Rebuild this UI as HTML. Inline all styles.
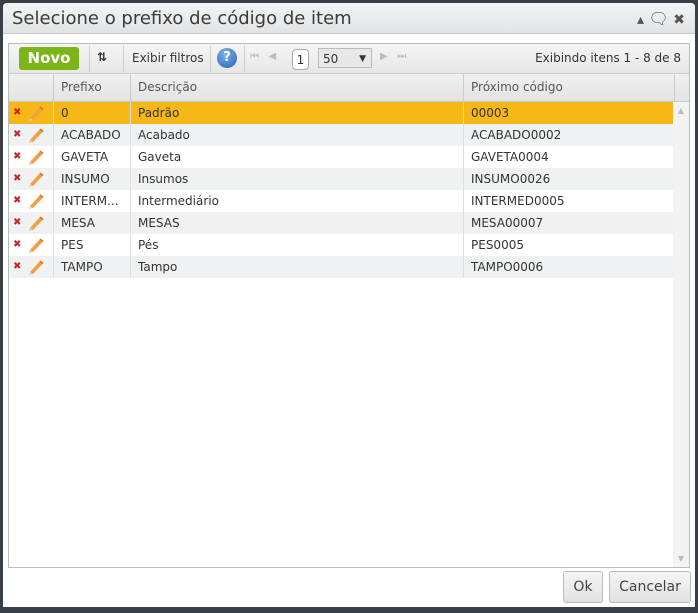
<!DOCTYPE html>
<html><head><meta charset="utf-8"><style>
body{margin:0;width:698px;height:613px;background:#3a3f47;font-family:"DejaVu Sans","Liberation Sans",sans-serif;font-size:12px;color:#333;position:relative;overflow:hidden}
.win{position:absolute;left:3px;top:3px;width:692px;height:604px;background:#fff;border-radius:4px 4px 0 0;overflow:hidden}
.title{height:30px;background:linear-gradient(#f3f4f5,#e1e3e5);border-bottom:1px solid #c5c8cc;font-size:18px;line-height:32px;padding-left:9px;color:#3a3a3a}
.ctrl{position:absolute;right:10px;top:6px;font-size:14px;color:#555}
.grid{position:absolute;left:5px;top:40px;width:680px;height:523px;border:1px solid #b8bbc0}
.tb{height:29px;background:linear-gradient(#f5f5f5,#e6e7e8);border-bottom:1px solid #ccc;position:relative}
.tb>*{position:absolute}
.novo{left:10px;top:3px;width:60px;height:23px;background:#7cb517;border-radius:3px;color:#fff;font-weight:bold;font-size:15px;line-height:23px;text-align:center}
.sep{top:2px;width:1px;height:26px;background:#ccc}
.hdr{height:27px;background:linear-gradient(#f0f0f0,#e4e4e4);border-bottom:1px solid #c8c8c8;position:relative}
.c{position:absolute;top:0;height:100%;border-left:1px solid #ccc;padding-left:7px;box-sizing:border-box;line-height:27px;color:#555}
.row{height:22px;position:relative}
.row .c{line-height:22px;color:#333;border-left:1px solid #ddd}
.row:nth-child(even){background:#f0f1f2}
.sel{background:#f5b816!important}
.x{position:absolute;left:4px;top:5px;color:#c8262a;font-size:10px;font-weight:bold}
.p{position:absolute;left:18px;top:3px}
.btn{position:absolute;top:568px;height:30px;border:1px solid #bbb;border-radius:3px;background:linear-gradient(#f5f5f5,#e2e2e2);font-size:14px;line-height:30px;text-align:center;color:#444}
</style></head><body>
<svg width="0" height="0" style="position:absolute"><defs><symbol id="pen" viewBox="0 0 18 16"><path d="M3 13 L13 2 L16 4.5 L6 15 Z" fill="#f0a040"/><path d="M3 13 L6 15 L2 16 Z" fill="#e8c9a0"/><path d="M13 2 L16 4.5" stroke="#e07020" stroke-width="1.5"/></symbol></defs></svg>
<div class="win">
<div class="title">Selecione o prefixo de código de item</div>
<div class="ctrl">▴ <span style="font-size:16px">🗨</span> ✖</div>
<div class="grid">
<div class="tb">
<div class="novo">Novo</div>
<div class="sep" style="left:80px"></div>
<div style="left:88px;top:6px;font-weight:bold">⇅</div>
<div class="sep" style="left:114px"></div>
<div style="left:123px;top:7px">Exibir filtros</div>
<div class="sep" style="left:201px"></div>
<div style="left:208px;top:4px;width:20px;height:20px;border-radius:50%;background:radial-gradient(circle at 40% 30%,#7ab0ea,#2a62b8);color:#fff;font-weight:bold;text-align:center;line-height:20px;font-size:13px">?</div>
<div class="sep" style="left:235px"></div>
<div style="left:241px;top:7px;color:#bbb;font-size:10px">⏮ &nbsp; ◀</div>
<div style="left:283px;top:5px;width:15px;height:19px;border:1px solid #aaa;border-radius:4px;background:#fff;text-align:center;line-height:20px">1</div>
<div style="left:309px;top:4px;width:54px;height:20px;border:1px solid #bbb;background:#e8e8e8;line-height:20px;padding-left:4px;box-sizing:border-box">50<span style="position:absolute;right:5px;font-size:9px">▼</span></div>
<div style="left:371px;top:7px;color:#bbb;font-size:10px">▶ &nbsp; ⏭</div>
<div style="right:8px;top:7px">Exibindo itens 1 - 8 de 8</div>
</div>
<div class="hdr">
<div class="c" style="left:44px;width:77px">Prefixo</div>
<div class="c" style="left:121px;width:333px">Descrição</div>
<div class="c" style="left:454px;width:211px">Próximo código</div>
<div class="c" style="left:665px;width:15px;padding:0"></div>
</div>
<div style="position:absolute;left:664px;top:58px;width:16px;height:465px;background:#f3f3f3"><div style="color:#bbb;font-size:8px;text-align:center;margin-top:4px">▲</div><div style="color:#bbb;font-size:8px;text-align:center;position:absolute;bottom:4px;width:16px">▼</div></div>
<div style="width:664px">
<div class="row sel"><span class="x">✖</span><svg class="p" width="18" height="16"><use href="#pen"/></svg><div class="c" style="left:44px;width:77px">0</div><div class="c" style="left:121px;width:333px">Padrão</div><div class="c" style="left:454px;width:210px">00003</div></div>
<div class="row"><span class="x">✖</span><svg class="p" width="18" height="16"><use href="#pen"/></svg><div class="c" style="left:44px;width:77px">ACABADO</div><div class="c" style="left:121px;width:333px">Acabado</div><div class="c" style="left:454px;width:210px">ACABADO0002</div></div>
<div class="row"><span class="x">✖</span><svg class="p" width="18" height="16"><use href="#pen"/></svg><div class="c" style="left:44px;width:77px">GAVETA</div><div class="c" style="left:121px;width:333px">Gaveta</div><div class="c" style="left:454px;width:210px">GAVETA0004</div></div>
<div class="row"><span class="x">✖</span><svg class="p" width="18" height="16"><use href="#pen"/></svg><div class="c" style="left:44px;width:77px">INSUMO</div><div class="c" style="left:121px;width:333px">Insumos</div><div class="c" style="left:454px;width:210px">INSUMO0026</div></div>
<div class="row"><span class="x">✖</span><svg class="p" width="18" height="16"><use href="#pen"/></svg><div class="c" style="left:44px;width:77px">INTERM...</div><div class="c" style="left:121px;width:333px">Intermediário</div><div class="c" style="left:454px;width:210px">INTERMED0005</div></div>
<div class="row"><span class="x">✖</span><svg class="p" width="18" height="16"><use href="#pen"/></svg><div class="c" style="left:44px;width:77px">MESA</div><div class="c" style="left:121px;width:333px">MESAS</div><div class="c" style="left:454px;width:210px">MESA00007</div></div>
<div class="row"><span class="x">✖</span><svg class="p" width="18" height="16"><use href="#pen"/></svg><div class="c" style="left:44px;width:77px">PES</div><div class="c" style="left:121px;width:333px">Pés</div><div class="c" style="left:454px;width:210px">PES0005</div></div>
<div class="row"><span class="x">✖</span><svg class="p" width="18" height="16"><use href="#pen"/></svg><div class="c" style="left:44px;width:77px">TAMPO</div><div class="c" style="left:121px;width:333px">Tampo</div><div class="c" style="left:454px;width:210px">TAMPO0006</div></div>
</div>
</div>
<div class="btn" style="left:560px;width:38px">Ok</div>
<div class="btn" style="left:606px;width:80px">Cancelar</div>
</div>
</body></html>
